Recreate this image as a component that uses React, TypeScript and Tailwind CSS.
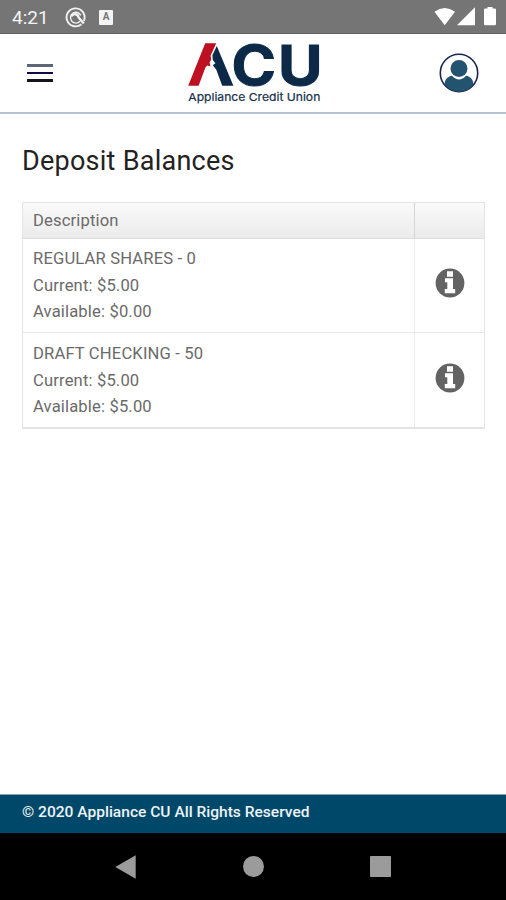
const ACCOUNTS = [
  { name: "REGULAR SHARES - 0", current: "$5.00", available: "$0.00" },
  { name: "DRAFT CHECKING - 50", current: "$5.00", available: "$5.00" },
];

function StatusBar() {
  return (
    <div className="flex h-[34px] shrink-0 items-center border-b border-[#606060] bg-[#757575] pl-3 text-white">
      <span className="w-[53px] pt-[2px] text-[19px] leading-none text-[#f4f4f4]">4:21</span>
      <svg className="h-[22px] w-[22px]" viewBox="0 0 22 22" fill="none" stroke="#f2f2f2">
        <path d="M16.4 18.2A9 9 0 1 1 18.8 15" strokeWidth="1.9" />
        <path d="M15 15.2A5.4 5.4 0 1 1 15.8 9.4" strokeWidth="1.4" />
        <path d="M6.2 10.2C8.8 6.8 13 8 13.6 11.4L18.8 17.4" strokeWidth="2.3" />
      </svg>
      <span className="ml-[12px] mt-px flex h-[15px] w-[14px] items-center justify-center rounded-[1px] bg-[#f4f4f4] text-[10px] font-bold leading-none text-[#777]">
        A
      </span>
      <svg className="ml-auto h-[20px] w-[72px]" viewBox="0 0 72 20" fill="#fff">
        <path d="M0.5 4.8Q10.7-2.6 21 4.8L10.7 18.2z" />
        <path d="M41 0.3V18.2H23z" />
        <path d="M53.5 1.6V0h5v1.6h2.2q1.3 0 1.3 1.3V17q0 1.3-1.3 1.3h-9.4q-1.3 0-1.3-1.3V2.9q0-1.3 1.3-1.3z" />
      </svg>
    </div>
  );
}

function Logo() {
  return (
    <svg
      className="mr-[8px] h-[64px] w-[136px] overflow-visible"
      viewBox="0 0 136 64"
      role="img"
      aria-label="Appliance Credit Union"
    >
      <path d="M19.2 2.3H30.2L27 9.5 24.6 14.5 25.2 18.5 23.6 21.5 24.4 25.2 21.4 24.4 19.6 26 12.6 44.8H2.2z" fill="#bd1020" />
      <path d="M30.8 5L47.4 44.8H36.2L30.2 28.5 26.8 24.2 29.4 22.2 26.8 19 26.4 14.2z" fill="#0c2a48" />
      <g className="font-['Inter'] font-bold" fill="#0c2a48" stroke="#0c2a48" strokeWidth="1">
        <text x="45.6" y="43.8" fontSize="55.5" textLength="44.5" lengthAdjust="spacingAndGlyphs">C</text>
        <text x="92.1" y="43.8" fontSize="55.5" textLength="44.5" lengthAdjust="spacingAndGlyphs">U</text>
      </g>
      <text
        className="font-['Inter']"
        x="2.3"
        y="59.6"
        fontSize="11"
        fill="#17304a"
        stroke="#17304a"
        strokeWidth="0.2"
        textLength="132"
        lengthAdjust="spacingAndGlyphs"
      >
        Appliance Credit Union
      </text>
    </svg>
  );
}

function Header() {
  return (
    <header className="flex h-[80px] shrink-0 items-center justify-between border-b-2 border-[#b5c3d3] pl-[27px] pr-[27px]">
      <button className="flex w-[50px] flex-col gap-[5px]" aria-label="Menu">
        <span className="h-[3px] w-[26px] bg-[#5f6675]" />
        <span className="h-[2px] w-[26px] bg-[#100b45]" />
        <span className="h-[3px] w-[26px] bg-[#15151f]" />
      </button>
      <Logo />
      <button aria-label="Profile">
        <svg className="h-[40px] w-[40px]" viewBox="0 0 40 40">
          <circle cx="20" cy="20" r="18.7" fill="#fff" stroke="#172450" strokeWidth="1.6" />
          <path d="M5.6 31.2C5.8 26.4 8.6 23.4 13 22.8Q20 30.4 27 22.8C31.4 23.4 34.2 26.4 34.4 31.2Q29 38.6 20 38.8 11 38.6 5.6 31.2z" fill="#23546f" />
          <circle cx="20" cy="15.4" r="8.5" fill="#23546f" />
        </svg>
      </button>
    </header>
  );
}

function InfoIcon() {
  return (
    <svg className="h-[30px] w-[30px]" viewBox="0 0 30 30">
      <circle cx="15" cy="15" r="14.4" fill="#636363" />
      <path d="M12 3.2h6v5.6h-6zM10 10.2h8v10.8h2.2v4.2H9.8v-4.2h2.5v-6.8H10z" fill="#fff" />
    </svg>
  );
}

function BalanceTable() {
  return (
    <div className="ml-[22px] mr-[21px] mt-[25px] border border-b-2 border-[#e4e4e4] text-[16.6px] tracking-[0.15px] text-[#6a6a6a]">
      <div className="flex h-[36px] border-b border-[#dedede] bg-linear-to-b from-[#fafafa] to-[#ebebeb]">
        <div className="flex-1 pl-[10px] leading-[36px]">Description</div>
        <div className="w-[70px] border-l border-[#d5d5d5]" />
      </div>
      {ACCOUNTS.map((a) => (
        <div key={a.name} className="group flex h-[94px] border-b border-[#e8e8e8] last:border-b-0">
          <div className="flex-1 pl-[10px] pt-[7px] leading-[26.6px] group-last:pt-[8px]">
            <div>{a.name}</div>
            <div>Current: {a.current}</div>
            <div>Available: {a.available}</div>
          </div>
          <div className="flex w-[70px] items-center justify-center border-l border-[#ececec] pb-[5px] group-last:pb-[4px]">
            <InfoIcon />
          </div>
        </div>
      ))}
    </div>
  );
}

function NavBar() {
  return (
    <nav className="flex h-[67px] shrink-0 items-center justify-between bg-black pl-[115px] pr-[115px]">
      <svg className="h-[24px] w-[22px]" viewBox="0 0 22 24">
        <path d="M0.3 12L20.7 0.3V23.7z" fill="#9b9b9b" />
      </svg>
      <span className="h-[21px] w-[21px] rounded-full bg-[#9b9b9b]" />
      <span className="h-[21px] w-[21px] rounded-[1px] bg-[#9b9b9b]" />
    </nav>
  );
}

export default function App() {
  return (
    <div className="flex h-screen flex-col bg-white font-['Roboto',sans-serif]">
      <StatusBar />
      <Header />
      <main className="flex-1">
        <h1 className="mt-[31px] pl-[22px] text-[27px] leading-[32px] tracking-[0.25px] text-[#222]">Deposit Balances</h1>
        <BalanceTable />
      </main>
      <footer className="h-[39px] shrink-0 border-t border-[#8ba3b8] bg-[#004869] pl-[22px] text-[15.55px] font-medium leading-[34px] text-[#eef3f6]">
        © 2020 Appliance CU All Rights Reserved
      </footer>
      <NavBar />
    </div>
  );
}
